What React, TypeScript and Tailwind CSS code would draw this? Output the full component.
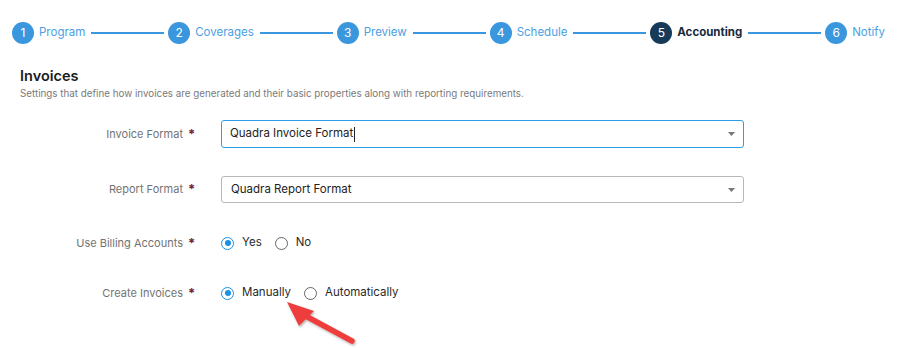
import React from "react";

const steps = [
  { n: 1, label: "Program" },
  { n: 2, label: "Coverages" },
  { n: 3, label: "Preview" },
  { n: 4, label: "Schedule" },
  { n: 5, label: "Accounting", active: true },
  { n: 6, label: "Notify" },
];

function Caret() {
  return (
    <svg width="7" height="4" viewBox="0 0 7 4" className="ml-auto mr-[8px]">
      <path d="M0 0 L7 0 L3.5 4 Z" fill="#777" />
    </svg>
  );
}

function Radio({ checked, label }: { checked?: boolean; label: string }) {
  return (
    <div className="flex items-center">
      {checked ? (
        <span className="w-[13px] h-[13px] rounded-full border-[1.5px] border-[#1a8fe3] flex items-center justify-center">
          <span className="w-[6px] h-[6px] rounded-full bg-[#1a8fe3]" />
        </span>
      ) : (
        <span className="w-[13px] h-[13px] rounded-full border-[1.5px] border-[#666]" />
      )}
      <span className="ml-[8px] text-[11.5px] text-[#2a2a2a]">{label}</span>
    </div>
  );
}

function Row({ label, children, h }: { label: string; children: React.ReactNode; h: string }) {
  return (
    <div className={`flex items-center ${h}`}>
      <div className="w-[183px] text-right text-[11px] text-[#737373]">{label}</div>
      <div className="w-[38px] pl-[5px] text-[13px] text-[#7a1a2e] font-bold leading-none">*</div>
      {children}
    </div>
  );
}

export default function App() {
  return (
    <div
      className="relative w-[900px] h-[348px] bg-white overflow-hidden"
      style={{ fontFamily: "Inter, 'Noto Sans', sans-serif" }}
    >
      {/* stepper */}
      <div className="flex items-center pl-[12px] pr-[15px] pt-[22px] h-[44px]">
        {steps.map((s, i) => (
          <React.Fragment key={s.n}>
            <div className="flex items-center">
              <span
                className={`w-[22px] h-[22px] rounded-full flex items-center justify-center text-white text-[12px] ${
                  s.active ? "bg-[#163a58]" : "bg-[#3a97de]"
                }`}
              >
                {s.n}
              </span>
              <span
                className={`ml-[5px] text-[11.5px] ${
                  s.active ? "font-bold text-[#172a3a]" : "text-[#4a9fe3]"
                }`}
              >
                {s.label}
              </span>
            </div>
            {i < steps.length - 1 && (
              <div className="flex-1 h-[1.5px] bg-[#3a97de] ml-[6px] mr-[4px]" />
            )}
          </React.Fragment>
        ))}
      </div>

      {/* heading */}
      <div className="pl-[20px] pt-[22px]">
        <div className="text-[14.5px] font-semibold text-[#1c1c1c] leading-[20px]">Invoices</div>
        <div className="text-[9.8px] text-[#7a7a7a] leading-[15px]">
          Settings that define how invoices are generated and their basic properties along with reporting requirements.
        </div>
      </div>

      {/* form */}
      <div className="pt-[19px]">
        <Row label="Invoice Format" h="h-[28px]">
          <div className="w-[523px] h-[28px] border-[1.5px] border-[#2a9fe8] rounded-[3px] flex items-center pl-[8px]">
            <span className="text-[11.5px] text-[#222]">Quadra Invoice Format</span>
            <span className="w-[1px] h-[15px] bg-[#222] ml-[1px]" />
            <Caret />
          </div>
        </Row>
        <div className="h-[28px]" />
        <Row label="Report Format" h="h-[27px]">
          <div className="w-[523px] h-[27px] border border-[#b8b8b8] rounded-[3px] flex items-center pl-[9px]">
            <span className="text-[11.5px] text-[#222]">Quadra Report Format</span>
            <Caret />
          </div>
        </Row>
        <div className="h-[27px]" />
        <Row label="Use Billing Accounts" h="h-[26px]">
          <div className="flex items-center gap-[13px]">
            <Radio checked label="Yes" />
            <Radio label="No" />
          </div>
        </Row>
        <div className="h-[24px]" />
        <Row label="Create Invoices" h="h-[26px]">
          <div className="flex items-center gap-[13px]">
            <Radio checked label="Manually" />
            <Radio label="Automatically" />
          </div>
        </Row>
      </div>

      {/* annotation arrow */}
      <svg className="absolute left-0 top-0" width="900" height="348" viewBox="0 0 900 348">
        <defs>
          <filter id="sh" x="-20%" y="-20%" width="140%" height="140%">
            <feDropShadow dx="1" dy="1.5" stdDeviation="1.2" floodColor="#000" floodOpacity="0.3" />
          </filter>
        </defs>
        <g filter="url(#sh)">
          <line x1="352" y1="341" x2="302" y2="314" stroke="#ee3e3e" strokeWidth="5.5" strokeLinecap="round" />
          <path d="M287 302 L314 311 L299 326 Z" fill="#ee3e3e" />
        </g>
      </svg>
    </div>
  );
}
